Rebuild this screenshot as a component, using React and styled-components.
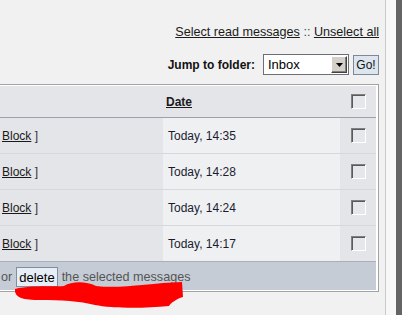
import React from 'react'
import styled, { createGlobalStyle } from 'styled-components'

const GlobalStyle = createGlobalStyle`
  html, body {
    margin: 0;
    padding: 0;
    background: #f1f1f1;
    font-family: "Liberation Sans", Arial, sans-serif;
    font-size: 12px;
    color: #222;
  }
`

const messages = ['Today, 14:35', 'Today, 14:28', 'Today, 14:24', 'Today, 14:17']

const App = () => {
  return (
    <>
      <GlobalStyle />
      <Page>
        <Main>
          <TopLinks>
            <Link>Select read messages</Link>
            <Sep> :: </Sep>
            <Link>Unselect all</Link>
          </TopLinks>
          <FolderRow>
            <FolderLabel>Jump to folder:</FolderLabel>
            <FakeSelect>
              <SelectText>Inbox</SelectText>
              <ArrowButton>
                <svg width="7" height="4" viewBox="0 0 7 4">
                  <path d="M0 0 H7 L3.5 4 Z" fill="#000" />
                </svg>
              </ArrowButton>
            </FakeSelect>
            <GoButton>Go!</GoButton>
          </FolderRow>

          <Table>
            <HeaderRow>
              <Cell />
              <HeaderCell><Link>Date</Link></HeaderCell>
              <BoxCell><CheckBox /></BoxCell>
            </HeaderRow>
            {messages.map((m, i) => (
              <Row key={i}>
                <Cell><span><Link>Block</Link> <Bracket>]</Bracket></span></Cell>
                <DateCell>{m}</DateCell>
                <BoxCell><CheckBox /></BoxCell>
              </Row>
            ))}
            <Footer>
              <FooterText>or</FooterText>
              <DeleteButton>delete</DeleteButton>
              <FooterText>the selected messages</FooterText>
            </Footer>
          </Table>

          <Scribble width="200" height="40" viewBox="0 0 200 40">
            <path
              d="M15 8 C30 4 55 6 64 5 C72 0 86 0 96 5 C120 8 150 2 182 1 L183 16 C176 18 171 22 169 25 C140 28 110 27 95 24 C80 20 60 19 40 19 C24 19 14 17 15 8 Z"
              fill="#ff0000"
            />
          </Scribble>
        </Main>
        <Gutter />
        <ScrollEdge />
      </Page>
    </>
  )
}

const Page = styled.div`
  display: flex;
  width: 402px;
  height: 315px;
  overflow: hidden;
`

const Main = styled.div`
  position: relative;
  width: 379px;
  padding: 25px 6px 0 0;
  border-right: 1px solid #c9c9c9;
  display: flex;
  flex-direction: column;
  align-items: flex-end;
`

const Gutter = styled.div`
  width: 10px;
  background: #f7f7f7;
`

const ScrollEdge = styled.div`
  flex: 1;
  background: #646464;
`

const Link = styled.a`
  color: #1a1a1a;
  text-decoration: underline;
  cursor: pointer;
`

const TopLinks = styled.div`
  font-size: 12.6px;
  line-height: 14px;
  height: 14px;
  white-space: nowrap;
`

const Sep = styled.span`
  color: #444;
`

const FolderRow = styled.div`
  display: flex;
  align-items: center;
  height: 21px;
  margin-top: 15px;
`

const FolderLabel = styled.span`
  font-weight: bold;
  margin-right: 8px;
  color: #111;
`

const FakeSelect = styled.div`
  box-sizing: border-box;
  width: 86px;
  height: 21px;
  border: 1px solid #6b7078;
  background: #fff;
  display: flex;
  align-items: center;
  justify-content: space-between;
  padding: 1px;
`

const SelectText = styled.span`
  padding-left: 3px;
  font-size: 13px;
  color: #000;
`

const ArrowButton = styled.span`
  box-sizing: border-box;
  width: 16px;
  height: 17px;
  background: #d4d0c8;
  border: 1px solid;
  border-color: #fff #404040 #404040 #fff;
  box-shadow: inset -1px -1px #808080;
  display: flex;
  align-items: center;
  justify-content: center;
`

const GoButton = styled.span`
  box-sizing: border-box;
  margin-left: 4px;
  width: 26px;
  height: 20px;
  background: #dde5ef;
  border: 1px solid #7c8898;
  display: flex;
  align-items: center;
  justify-content: center;
  color: #111;
`

const Table = styled.div`
  margin-top: 9px;
  width: 378px;
  border: 1px solid #a3a3a3;
  border-left: none;
  padding: 1px 1px 1px 0;
  background: #fff;
  display: grid;
  grid-template-columns: 164px 177px 36px;
`

const Row = styled.div`
  display: contents;
  & > * {
    height: 35px;
    border-bottom: 1px solid #d6d8dc;
  }
  &:nth-last-child(2) > * {
    border-bottom-color: #a9b0ba;
  }
`

const HeaderRow = styled(Row)`
  & > * {
    height: 31px;
    background: #cdd7e5;
    border-bottom: 1px solid #9aa1ab;
  }
`

const Cell = styled.div`
  display: flex;
  align-items: center;
  padding-left: 3px;
  background: #e3e5e9;
`

const HeaderCell = styled(Cell)`
  font-weight: bold;
  padding-left: 3px;
`

const DateCell = styled(Cell)`
  background: #eff0f2;
  padding-left: 5px;
  color: #1c1c30;
`

const BoxCell = styled(Cell)`
  padding-left: 0;
  justify-content: center;
`

const Bracket = styled.span`
  color: #333;
`

const CheckBox = styled.span`
  box-sizing: border-box;
  width: 15px;
  height: 15px;
  border: 1px solid;
  border-color: #808080 #fff #fff #808080;
  box-shadow: inset 1px 1px #5a5a5a;
  background: #e6e7ea;
`

const Footer = styled.div`
  grid-column: 1 / -1;
  height: 28px;
  background: #c5ccd5;
  display: flex;
  align-items: center;
  padding: 2px 0 0 2px;
  box-sizing: border-box;
  gap: 4px;
`

const FooterText = styled.span`
  font-size: 12.6px;
  color: #555;
`

const DeleteButton = styled.span`
  box-sizing: border-box;
  height: 20px;
  padding: 0 2px;
  display: flex;
  align-items: center;
  font-size: 13px;
  color: #000;
  background: #e8eef6;
  border: 1px solid #7f8ea5;
`

const Scribble = styled.svg`
  position: absolute;
  left: 0;
  top: 281px;
`

export default App
